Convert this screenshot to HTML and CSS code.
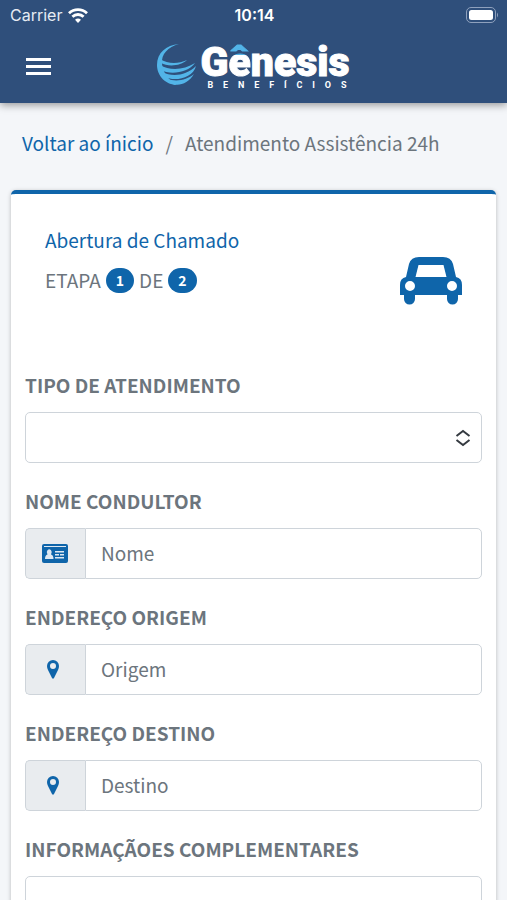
FILE: index.html
```html
<!DOCTYPE html>
<html lang="pt-BR">
<head>
  <meta charset="UTF-8" />
  <meta name="viewport" content="width=device-width, initial-scale=1.0" />
  <title>Gênesis Benefícios</title>
  <link rel="stylesheet" href="styles.css">
</head>
<body>
  <header class="topbar">
    <div class="status">
      <div class="carrier">
        <span>Carrier</span>
        <svg width="20" height="15" viewBox="0 0 20 15" fill="none" stroke="#fff" stroke-width="2.8">
          <path d="M1 5.2a13 13 0 0 1 18 0" />
          <path d="M4.4 8.8a8 8 0 0 1 11.2 0" />
          <path d="M10 15l-3-3.2a4.4 4.4 0 0 1 6 0z" fill="#fff" stroke="none" />
        </svg>
      </div>
      <span class="clock">10:14</span>
      <svg class="battery" width="33" height="16" viewBox="0 0 33 16">
        <rect x="0.5" y="0.5" width="29" height="15" rx="4.5" fill="none" stroke="#8fa1bd" />
        <rect x="3" y="3" width="24" height="10" rx="2.5" fill="#fff" />
        <path d="M31 5.500q2 2.500 0 5z" fill="#8fa1bd" />
      </svg>
    </div>
    <nav class="navbar">
      <button class="menu" type="button" aria-label="Menu">
        <svg width="25" height="18" viewBox="0 0 25 18" fill="#fff">
          <path d="M0 0h25v3H0zM0 7h25v3H0zM0 14h25v3H0z" />
        </svg>
      </button>
      <a class="logo" href="#">
        <svg width="39" height="41" viewBox="0 0 39 41" fill="#52b4e8">
          <path d="M22 0C9 1 0 9 0 21C0 32 9 41 20 41C16 39 6 31 5 20C4 10 11 3 22 0z" />
          <path d="M3 15C11 20 21 20 30 16C24 22 11 23 4 19z" />
          <path d="M3 21C13 27 27 26 38 19C31 29 13 31 4 26z" />
          <path d="M5 28C15 33 29 32 39 22C36 34 18 38 8 33z" />
          <path d="M10 35C20 38 30 36 37 30C31 40 21 43 13 39z" />
        </svg>
        <span class="logo-text">
          <span class="logo-name">G<span class="hat">ê</span>nesis</span>
          <span class="logo-sub"><span>B</span><span>E</span><span>N</span><span>E</span><span>F</span><span>Í</span><span>C</span><span>I</span><span>O</span><span>S</span></span>
        </span>
      </a>
    </nav>
  </header>

  <main>
    <nav class="breadcrumb">
      <a href="#">Voltar ao ínicio</a>
      <span>/</span>
      <span>Atendimento Assistência 24h</span>
    </nav>

    <form class="card">
      <div class="card-head">
        <div>
          <h1>Abertura de Chamado</h1>
          <p class="step">ETAPA <span class="badge">1</span> DE <span class="badge">2</span></p>
        </div>
        <svg class="car" width="62" height="50" viewBox="0 0 62 50">
          <path fill="#0f65aa" fill-rule="evenodd" d="M19 0h24q8 0 10 7l3 13q6 1 6 8v10h-4v4a5.500 5.500 0 0 1-11 0v-4H15v4a5.500 5.500 0 0 1-11 0v-4H0V28q0-7 6-8l3-13q2-7 10-7zM18.500 8l-3 12h31l-3-12zM10 24a5 5 0 1 0 0 10a5 5 0 0 0 0-10zM52 24a5 5 0 1 0 0 10a5 5 0 0 0 0-10z" />
        </svg>
      </div>

      <div class="field">
        <label for="tipo">TIPO DE ATENDIMENTO</label>
        <div class="select-wrap">
          <select id="tipo"><option></option></select>
          <svg width="16" height="18" viewBox="0 0 16 18" fill="none" stroke="#343a40" stroke-width="2">
            <path d="M1.500 7L8 2l6.500 5M1.500 11L8 16l6.500-5" />
          </svg>
        </div>
      </div>

      <div class="field">
        <label for="nome">NOME CONDULTOR</label>
        <div class="input-group">
          <span class="addon">
            <svg width="26" height="20" viewBox="0 0 26 20">
              <rect width="26" height="19" rx="2" fill="#0f65aa" />
              <path fill="#dfe9f2" d="M2 2h22v1H2zM3 15q0-4 2.500-4.500a2.500 3 0 1 1 3.500 0q2.500.5 2.500 4.500zM13 7h9v1.500h-9zM13 10h4v1.500h-4zM18 10h4v1.500h-4zM13 13h9v1.500h-9z" />
            </svg>
          </span>
          <input type="text" id="nome" placeholder="Nome">
        </div>
      </div>

      <div class="field">
        <label for="origem">ENDEREÇO ORIGEM</label>
        <div class="input-group">
          <span class="addon pin">
            <svg width="12" height="19" viewBox="0 0 12 19">
              <path fill="#0f65aa" fill-rule="evenodd" d="M6 0a6 6 0 0 1 6 6q0 2-1 4L7 18q-1 1.500-2 0L1 10Q0 8 0 6a6 6 0 0 1 6-6zM6 3a3 3 0 1 0 0 6a3 3 0 0 0 0-6z" />
            </svg>
          </span>
          <input type="text" id="origem" placeholder="Origem">
        </div>
      </div>

      <div class="field">
        <label for="destino">ENDEREÇO DESTINO</label>
        <div class="input-group">
          <span class="addon pin">
            <svg width="12" height="19" viewBox="0 0 12 19">
              <path fill="#0f65aa" fill-rule="evenodd" d="M6 0a6 6 0 0 1 6 6q0 2-1 4L7 18q-1 1.500-2 0L1 10Q0 8 0 6a6 6 0 0 1 6-6zM6 3a3 3 0 1 0 0 6a3 3 0 0 0 0-6z" />
            </svg>
          </span>
          <input type="text" id="destino" placeholder="Destino">
        </div>
      </div>

      <div class="field">
        <label for="info">INFORMAÇÃOES COMPLEMENTARES</label>
        <textarea id="info" rows="3"></textarea>
      </div>
    </form>
  </main>
</body>
</html>
```

FILE: styles.css
```css
* {
  box-sizing: border-box;
}
body {
  margin: 0;
  font-family: "Noto Sans CJK SC", "Noto Sans", sans-serif;
  font-size: 19px;
  line-height: 30px;
  background: #f4f6f9;
  color: #6c757d;
}
a {
  color: #0f65aa;
  text-decoration: none;
}
svg {
  display: block;
  flex-shrink: 0;
}
.topbar {
  background: #2f4f7b;
  color: #fff;
  box-shadow: 0 2px 8px rgba(0, 0, 0, 0.4);
}
.status {
  display: grid;
  grid-template-columns: 1fr auto 1fr;
  align-items: center;
  height: 30px;
  padding: 0 8px 0 10px;
  font-family: Inter, sans-serif;
  font-size: 16px;
}
.carrier {
  display: flex;
  align-items: center;
  gap: 6px;
  color: #e6ebf3;
}
.clock {
  font-weight: 600;
}
.battery {
  justify-self: end;
}
.navbar {
  display: grid;
  grid-template-columns: 1fr auto 1fr;
  align-items: center;
  height: 73px;
  padding: 0 26px;
}
.menu {
  justify-self: start;
  padding: 0;
  border: none;
  background: none;
  cursor: pointer;
}
.logo {
  display: flex;
  gap: 4px;
  color: #fff;
}
.logo-text {
  display: flex;
  flex-direction: column;
  font-family: Roboto, sans-serif;
}
.logo-name {
  font-size: 41px;
  font-weight: 900;
  line-height: 36px;
  -webkit-text-stroke: 1px #fff;
}
/* blue circumflex over a white e */
.hat {
  background: linear-gradient(#52b4e8 17px, #fff 17px);
  background-clip: text;
  -webkit-background-clip: text;
  color: transparent;
  -webkit-text-stroke-color: transparent;
}
.logo-sub {
  display: flex;
  justify-content: space-between;
  padding: 0 3px 0 7px;
  font-size: 9px;
  font-weight: 700;
  line-height: 10px;
}
main {
  padding: 0 11px 24px;
}
.breadcrumb {
  display: flex;
  gap: 12px;
  padding: 25px 11px 32px;
}
.card {
  padding: 31px 14px 14px;
  border-top: 4px solid #0f65aa;
  border-radius: 5px;
  background: #fff;
  box-shadow: 0 1px 4px rgba(0, 0, 0, 0.25);
}
.card-head {
  display: flex;
  justify-content: space-between;
  align-items: flex-start;
  padding: 0 20px;
  margin-bottom: 63px;
}
.car {
  margin-top: 32px;
}
h1 {
  margin: 0 0 10px;
  color: #0f65aa;
  font-size: 19px;
  font-weight: 400;
  line-height: 30px;
}
.step {
  display: flex;
  align-items: center;
  gap: 5px;
  margin: 0;
}
.badge {
  padding: 0 10px;
  border-radius: 13px;
  background: #0f65aa;
  color: #fff;
  font-size: 14px;
  font-weight: 700;
  line-height: 25px;
}
.field {
  margin-bottom: 23px;
}
label {
  display: block;
  margin-bottom: 12px;
  font-weight: 700;
}
select,
input,
textarea {
  display: block;
  width: 100%;
  padding: 0 15px 2px;
  border: 1px solid #ced4da;
  border-radius: 5px;
  background: #fff;
  color: #495057;
  font: inherit;
}
select,
input {
  height: 51px;
}
select {
  appearance: none;
}
.select-wrap {
  display: grid;
  align-items: center;
}
.select-wrap > * {
  grid-area: 1 / 1;
}
.select-wrap svg {
  justify-self: end;
  margin-right: 11px;
  pointer-events: none;
}
.input-group {
  display: flex;
}
.addon {
  display: flex;
  align-items: center;
  flex-shrink: 0;
  width: 60px;
  padding-left: 16px;
  border: 1px solid #ced4da;
  border-right: none;
  border-radius: 5px 0 0 5px;
  background: #e9ecef;
}
.addon.pin {
  padding-left: 21px;
}
.input-group input {
  border-radius: 0 5px 5px 0;
}
input::placeholder {
  color: #6c757d;
  opacity: 1;
}
```
